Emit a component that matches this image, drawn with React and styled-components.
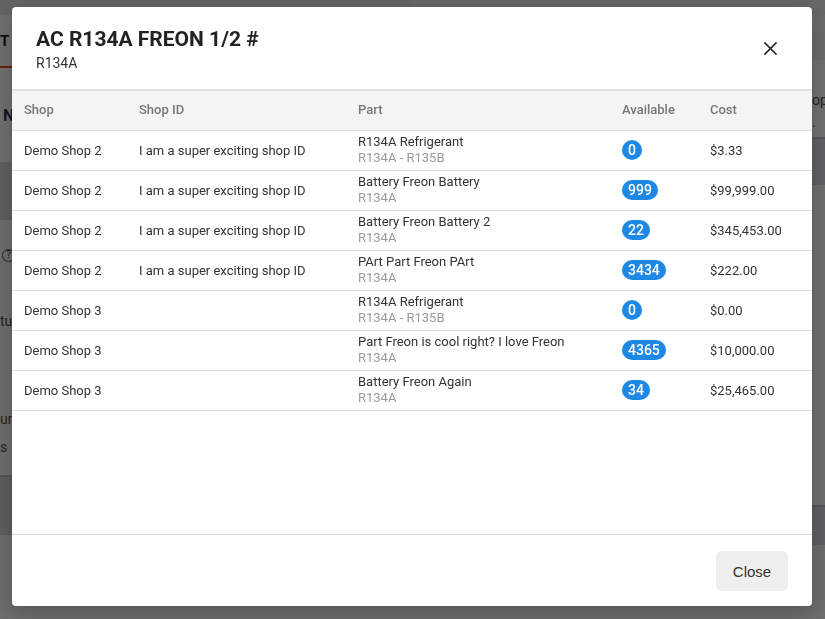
import React from 'react'
import styled, { createGlobalStyle } from 'styled-components'

const GlobalStyle = createGlobalStyle`
  * { box-sizing: border-box; }
  html, body { margin: 0; padding: 0; }
  body {
    font-family: Roboto, "Liberation Sans", sans-serif;
    color: #333;
    background: #dcdcdc;
    overflow: hidden;
  }
`

const rows = [
  { shop: 'Demo Shop 2', shopId: 'I am a super exciting shop ID', part: 'R134A Refrigerant', sub: 'R134A - R135B', qty: 0, cost: '$3.33' },
  { shop: 'Demo Shop 2', shopId: 'I am a super exciting shop ID', part: 'Battery Freon Battery', sub: 'R134A', qty: 999, cost: '$99,999.00' },
  { shop: 'Demo Shop 2', shopId: 'I am a super exciting shop ID', part: 'Battery Freon Battery 2', sub: 'R134A', qty: 22, cost: '$345,453.00' },
  { shop: 'Demo Shop 2', shopId: 'I am a super exciting shop ID', part: 'PArt Part Freon PArt', sub: 'R134A', qty: 3434, cost: '$222.00' },
  { shop: 'Demo Shop 3', shopId: '', part: 'R134A Refrigerant', sub: 'R134A - R135B', qty: 0, cost: '$0.00' },
  { shop: 'Demo Shop 3', shopId: '', part: 'Part Freon is cool right? I love Freon', sub: 'R134A', qty: 4365, cost: '$10,000.00' },
  { shop: 'Demo Shop 3', shopId: '', part: 'Battery Freon Again', sub: 'R134A', qty: 34, cost: '$25,465.00' },
]

/* page behind the dialog */

const Page = styled.div`
  display: grid;
  grid-template-columns: 412px 1fr;
  height: 619px;
`

const Column = styled.div`
  display: flex;
  flex-direction: column;
`

const Section = styled.div`
  height: ${(p) => p.$h || 'auto'};
  flex: ${(p) => (p.$h ? 'none' : '1')};
  background: ${(p) => p.$bg};
  border-top: ${(p) => (p.$edge ? '2px solid #a9abae' : 'none')};
  padding: ${(p) => p.$pad || '0'};
  display: flex;
  flex-direction: column;
`

const Tab = styled.div`
  font-size: 15px;
  font-weight: 700;
  color: #222;
  padding: 17px 0 0 0;
  height: 53px;
  border-bottom: 2px solid #d9381e;
`

const PageLabel = styled.div`
  font-size: ${(p) => p.$size || '14px'};
  font-weight: ${(p) => p.$weight || 400};
  color: ${(p) => p.$color || '#444'};
  margin-top: ${(p) => p.$top || '0'};
  padding-left: ${(p) => p.$left || '0'};
  line-height: 16px;
`

const HelpIcon = styled.div`
  width: 13px;
  height: 13px;
  border: 1.5px solid #444;
  border-radius: 50%;
  margin: 29px 0 0 2px;
  font-size: 10px;
  line-height: 10px;
  text-align: center;
  color: #444;
`

const Backdrop = styled.div`
  position: fixed;
  inset: 0;
  background: rgba(0, 0, 0, 0.5);
  display: flex;
  justify-content: flex-start;
  align-items: flex-start;
  padding: 7px 0 0 12px;
`

/* dialog */

const Dialog = styled.div`
  width: 800px;
  height: 599px;
  background: #fff;
  border-radius: 4px;
  display: flex;
  flex-direction: column;
  overflow: hidden;
  box-shadow: 0 6px 24px rgba(0, 0, 0, 0.25);
`

const Header = styled.div`
  display: flex;
  align-items: center;
  justify-content: space-between;
  padding: 20px 24px 16px 24px;
  border-bottom: 2px solid #e2e2e2;
`

const Title = styled.h2`
  margin: 0;
  font-size: 21px;
  line-height: 24px;
  font-weight: 700;
  color: #222;
`

const Subtitle = styled.div`
  margin-top: 2px;
  font-size: 14px;
  line-height: 20px;
  color: #333;
`

const IconButton = styled.button`
  border: none;
  background: none;
  width: 32px;
  height: 32px;
  margin-right: 2px;
  margin-top: -4px;
  display: flex;
  align-items: center;
  justify-content: center;
  cursor: pointer;
  padding: 0;
`

const Body = styled.div`
  flex: 1;
  overflow: auto;
`

const Table = styled.table`
  width: 100%;
  border-collapse: collapse;
  table-layout: fixed;
  font-size: 13px;
`

const Th = styled.th`
  width: ${(p) => p.$w};
  height: 39px;
  padding: 0 12px 2px 12px;
  text-align: left;
  font-weight: 500;
  color: #777;
  background: #f4f4f4;
  border-bottom: 1px solid #e0e0e0;
`

const Td = styled.td`
  height: 40px;
  padding: 0 12px;
  color: #333;
  border-bottom: 1px solid #e0e0e0;
  white-space: nowrap;
`

const PartName = styled.div`
  line-height: 16px;
  color: #333;
`

const PartSub = styled.div`
  line-height: 16px;
  color: #9a9a9a;
`

const Badge = styled.span`
  display: inline-block;
  min-width: 20px;
  height: 20px;
  padding: 0 6px;
  border-radius: 10px;
  background: #1e88e5;
  color: #fff;
  font-size: 14px;
  font-weight: 500;
  line-height: 20px;
  text-align: center;
  vertical-align: middle;
`

const Footer = styled.div`
  display: flex;
  justify-content: flex-end;
  padding: 16px 24px 15px 24px;
  border-top: 1px solid #dadada;
`

const CloseButton = styled.button`
  width: 72px;
  height: 40px;
  border: none;
  border-radius: 6px;
  background: #efefef;
  color: #333;
  font-family: "Liberation Sans", Arial, sans-serif;
  font-size: 15px;
  cursor: pointer;
`

function CloseIcon() {
  return (
    <svg width="13" height="13" viewBox="0 0 13 13">
      <path d="M1 1 L12 12 M12 1 L1 12" stroke="#222" strokeWidth="1.6" strokeLinecap="square" />
    </svg>
  )
}

function Background() {
  return (
    <Page>
      <Column>
        <Section $h="15px" $bg="#cbcbcb" />
        <Section $h="147px" $bg="#e0e0e0">
          <Tab>T</Tab>
          <PageLabel $weight={700} $color="#1a2a4a" $size="16px" $top="40px" $left="3px">N</PageLabel>
        </Section>
        <Section $h="58px" $bg="#bfc1c4" />
        <Section $h="255px" $bg="#dedede">
          <HelpIcon>?</HelpIcon>
          <PageLabel $top="51px">tu</PageLabel>
          <PageLabel $top="82px">um</PageLabel>
          <PageLabel $top="12px">s</PageLabel>
        </Section>
        <Section $h="60px" $bg="#bcbec2" $edge />
        <Section $bg="#dcdcdc" />
      </Column>
      <Column>
        <Section $h="15px" $bg="#cfcfcf" />
        <Section $h="45px" $bg="#d8d8d8" />
        <Section $h="77px" $bg="#e2e2e2" $pad="0 0 0 400px">
          <PageLabel $top="32px">op</PageLabel>
          <PageLabel $top="6px" $color="#2050a0">.</PageLabel>
        </Section>
        <Section $h="48px" $bg="#c2c4c7" $edge />
        <Section $h="320px" $bg="#dfdfdf" />
        <Section $h="40px" $bg="#bec0c4" $edge />
        <Section $bg="#dcdcdc" />
      </Column>
    </Page>
  )
}

export default function App() {
  return (
    <>
      <GlobalStyle />
      <Background />
      <Backdrop>
        <Dialog>
          <Header>
            <div>
              <Title>AC R134A FREON 1/2 #</Title>
              <Subtitle>R134A</Subtitle>
            </div>
            <IconButton aria-label="Close">
              <CloseIcon />
            </IconButton>
          </Header>
          <Body>
            <Table>
              <thead>
                <tr>
                  <Th $w="115px">Shop</Th>
                  <Th $w="219px">Shop ID</Th>
                  <Th $w="264px">Part</Th>
                  <Th $w="88px">Available</Th>
                  <Th $w="114px">Cost</Th>
                </tr>
              </thead>
              <tbody>
                {rows.map((r, i) => (
                  <tr key={i}>
                    <Td>{r.shop}</Td>
                    <Td>{r.shopId}</Td>
                    <Td>
                      <PartName>{r.part}</PartName>
                      <PartSub>{r.sub}</PartSub>
                    </Td>
                    <Td>
                      <Badge>{r.qty}</Badge>
                    </Td>
                    <Td>{r.cost}</Td>
                  </tr>
                ))}
              </tbody>
            </Table>
          </Body>
          <Footer>
            <CloseButton>Close</CloseButton>
          </Footer>
        </Dialog>
      </Backdrop>
    </>
  )
}
